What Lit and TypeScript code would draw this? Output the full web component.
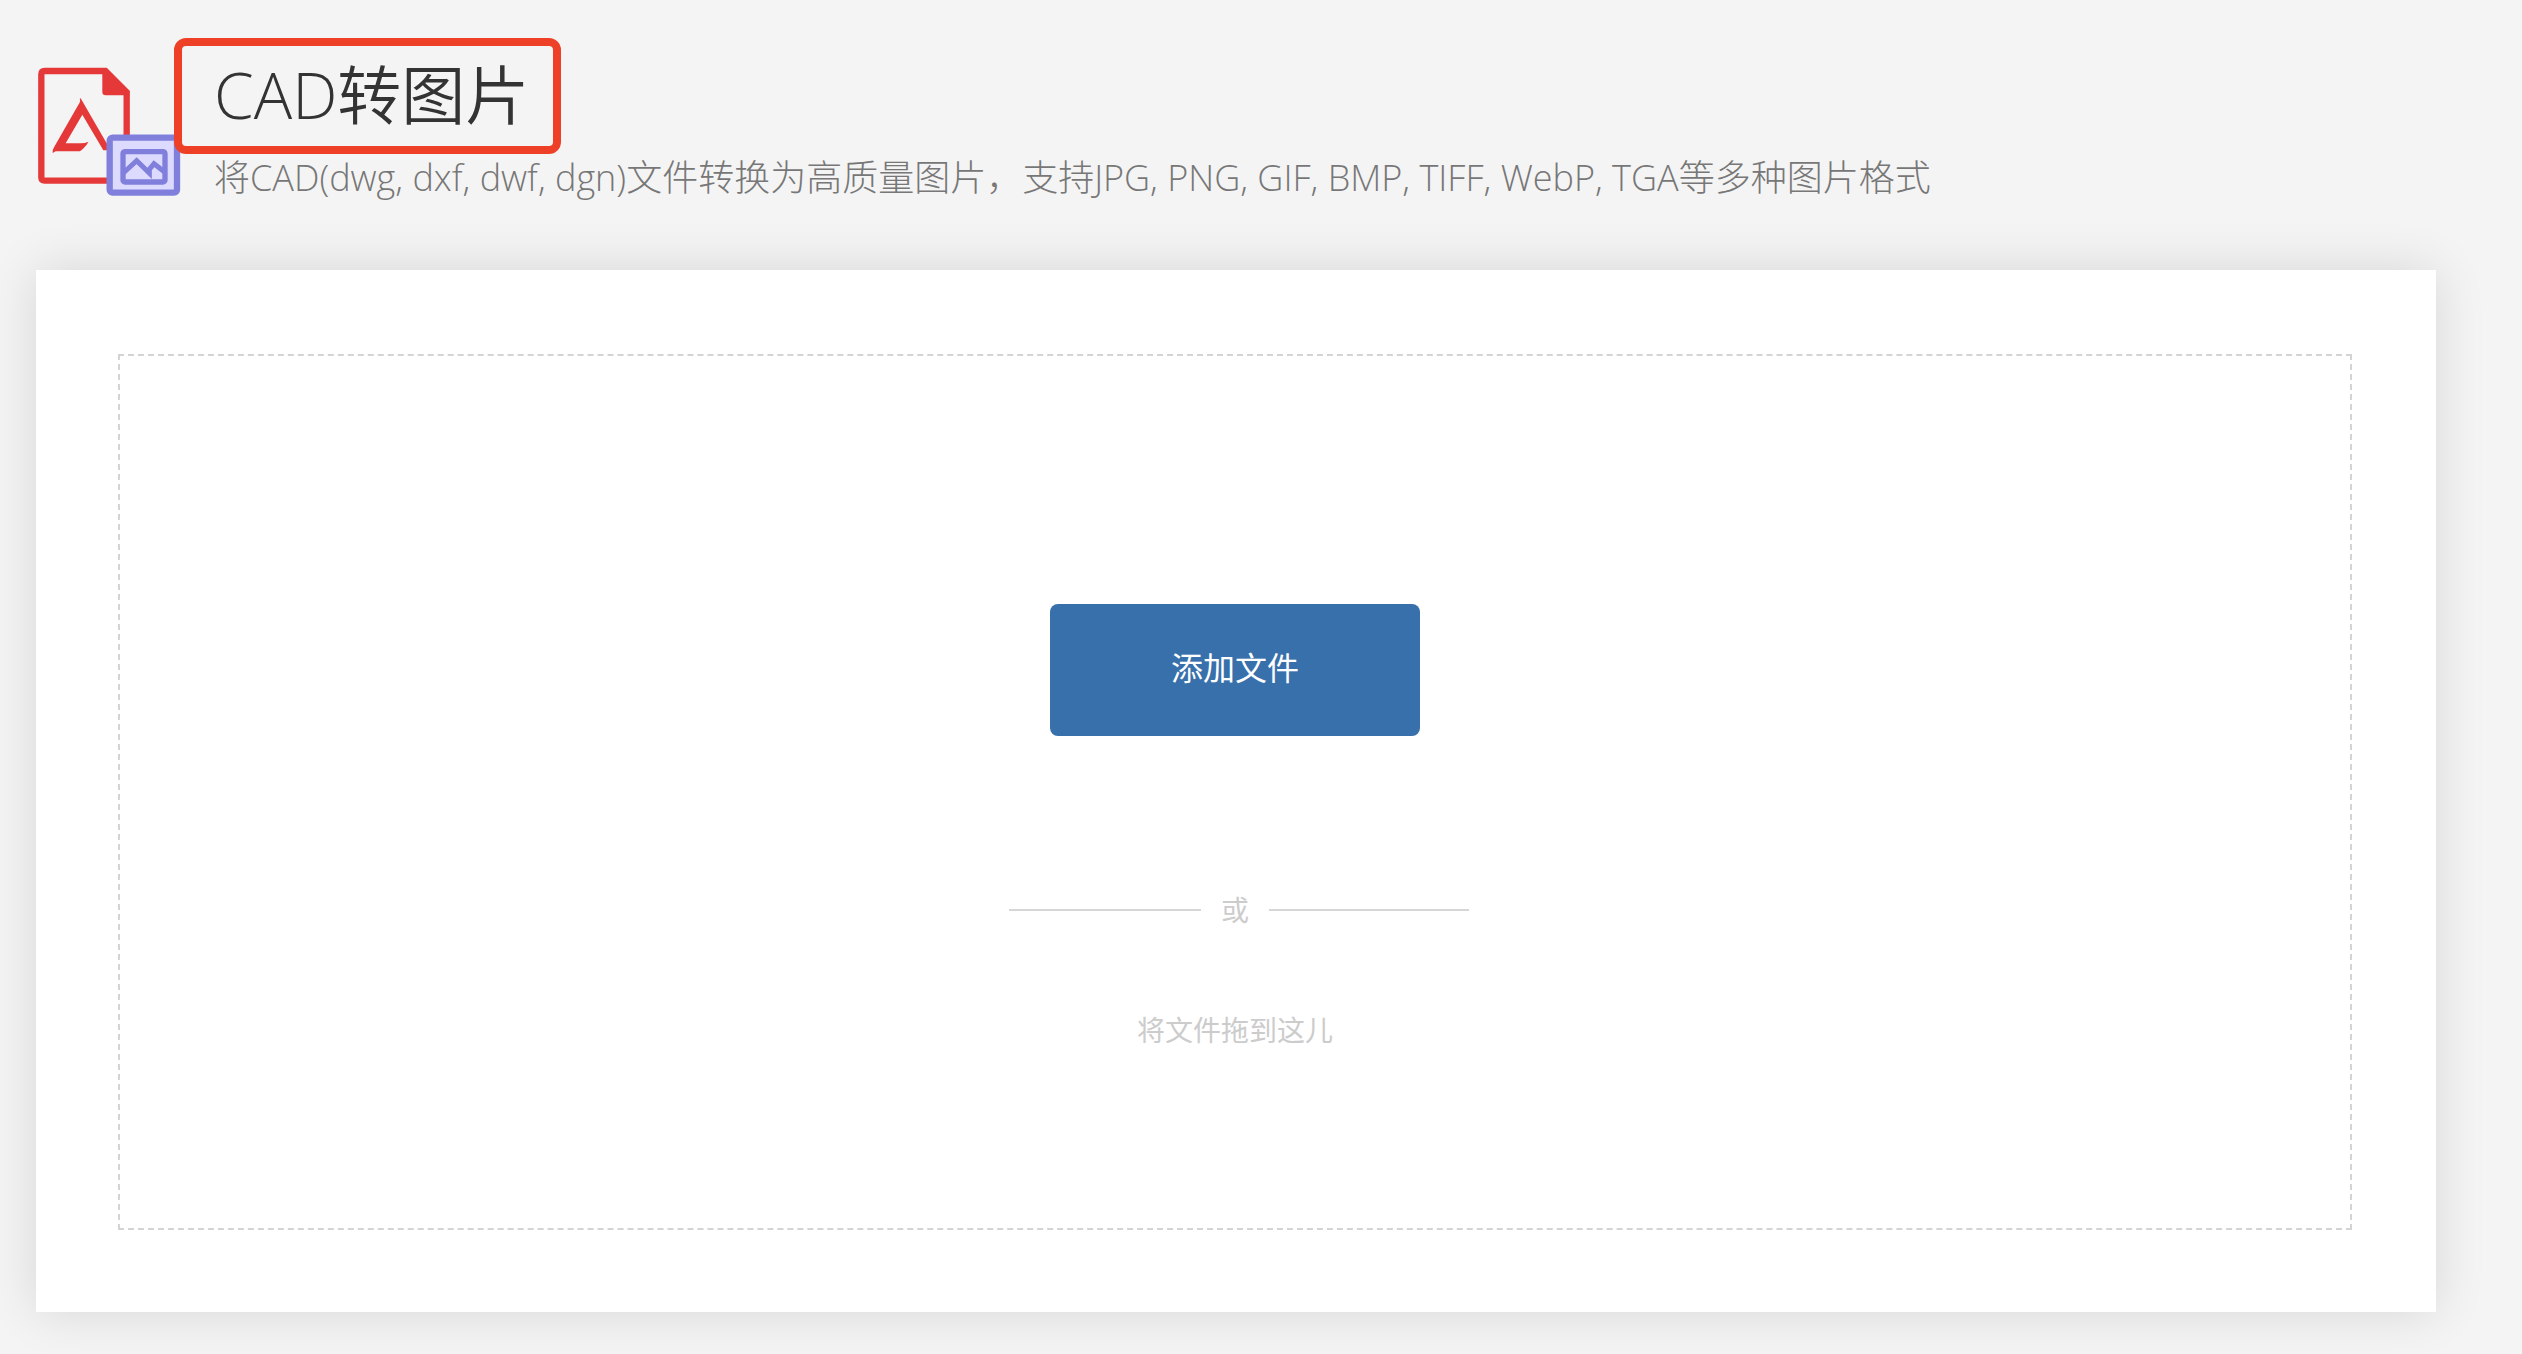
import { LitElement, html, css } from "lit";
import { customElement, state } from "lit/decorators.js";

@customElement("converter-icon")
class ConverterIcon extends LitElement {
  static styles = css`
    :host {
      display: block;
    }
    .icon {
      display: block;
      width: 144px;
      height: 130px;
    }
  `;

  render() {
    return html`
      <svg class="icon" viewBox="54 51 432 390" aria-hidden="true">
        <path
          d="M262 392H74Q64 392 64 382V73Q64 63 74 63H256L320 127V272"
          fill="none"
          stroke="#e53838"
          stroke-width="19"
        />
        <path d="M247 56H262L328 122V136H257Q247 136 247 126Z" fill="#e53838" />
        <path
          d="M182 145L266 290V301H250L187 194L137 280H182Q196 280 205 275Q200 288 180 304H107L98 309Q96 300 103 290L176 163Q183 152 179 146Z"
          fill="#e53838"
        />
        <rect
          x="269"
          y="263"
          width="202"
          height="165"
          rx="9"
          fill="#dcdaff"
          stroke="#8080dc"
          stroke-width="19"
        />
        <rect
          x="309"
          y="305"
          width="126"
          height="91"
          rx="6"
          fill="none"
          stroke="#8080dc"
          stroke-width="16"
        />
        <path
          d="M310 369L350 332L388 369V358L402 341L434 366"
          fill="none"
          stroke="#8080dc"
          stroke-width="15"
        />
      </svg>
    `;
  }
}

@customElement("app-root")
class AppRoot extends LitElement {
  @state() private dragging = false;

  static styles = css`
    :host {
      display: block;
      box-sizing: border-box;
      min-height: 100vh;
      padding: 38px 86px 42px 36px;
      background: #f4f4f4;
      color: #333;
      font-family: "Open Sans", "Noto Sans CJK SC", sans-serif;
      font-kerning: normal;
    }
    .header {
      display: flex;
      align-items: flex-start;
      gap: 32px;
      padding: 0 0 70px 2px;
    }
    .logo {
      flex: none;
      padding-top: 29px;
    }
    .title {
      position: relative;
      width: fit-content;
      margin: 0;
      font-size: 64px;
      line-height: 114px;
      font-weight: 350;
    }
    .title::after {
      content: "";
      position: absolute;
      inset: 0 -32px -2px -40px;
      border: 8px solid #ee4026;
      border-radius: 12px;
      pointer-events: none;
    }
    .subtitle {
      margin: 0;
      padding-top: 4px;
      color: #777;
      font-size: 36px;
      line-height: 44px;
      font-weight: 300;
    }
    .card {
      padding: 84px 84px 82px 82px;
      background: #fff;
      box-shadow: 0 0 48px rgba(0, 0, 0, 0.12);
    }
    .dropzone {
      display: flex;
      flex-direction: column;
      align-items: center;
      padding: 248px 0 178px;
      border: 2px dashed #d4d4d4;
    }
    .dropzone.active {
      border-color: #3870ab;
    }
    .add {
      min-width: 370px;
      padding: 40px 120px 44px;
      border: 0;
      border-radius: 8px;
      background: #3870ab;
      color: #fff;
      font: inherit;
      font-size: 32px;
      line-height: 48px;
      cursor: pointer;
    }
    .divider {
      display: grid;
      grid-template-columns: 192px auto 200px;
      align-items: center;
      gap: 20px;
      padding: 154px 0 0 8px;
    }
    .line {
      height: 2px;
      background: #d6d6d6;
    }
    .hint {
      margin: 0;
      color: #ccc;
      font-size: 28px;
      line-height: 40px;
    }
    .drag {
      padding-top: 80px;
    }
  `;

  private openPicker() {
    this.renderRoot.querySelector<HTMLInputElement>("input")?.click();
  }

  private onDrag(event: DragEvent, dragging: boolean) {
    event.preventDefault();
    this.dragging = dragging;
  }

  render() {
    return html`
      <header class="header">
        <converter-icon class="logo"></converter-icon>
        <div>
          <h1 class="title">CAD转图片</h1>
          <p class="subtitle">
            将CAD(dwg, dxf, dwf, dgn)文件转换为高质量图片，支持JPG, PNG, GIF, BMP, TIFF, WebP, TGA等多种图片格式
          </p>
        </div>
      </header>
      <main class="card">
        <section
          class="dropzone ${this.dragging ? "active" : ""}"
          @dragover=${(e: DragEvent) => this.onDrag(e, true)}
          @dragleave=${(e: DragEvent) => this.onDrag(e, false)}
          @drop=${(e: DragEvent) => this.onDrag(e, false)}
        >
          <button class="add" type="button" @click=${this.openPicker}>添加文件</button>
          <input type="file" multiple hidden />
          <div class="divider">
            <span class="line"></span>
            <p class="hint">或</p>
            <span class="line"></span>
          </div>
          <p class="hint drag">将文件拖到这儿</p>
        </section>
      </main>
    `;
  }
}
